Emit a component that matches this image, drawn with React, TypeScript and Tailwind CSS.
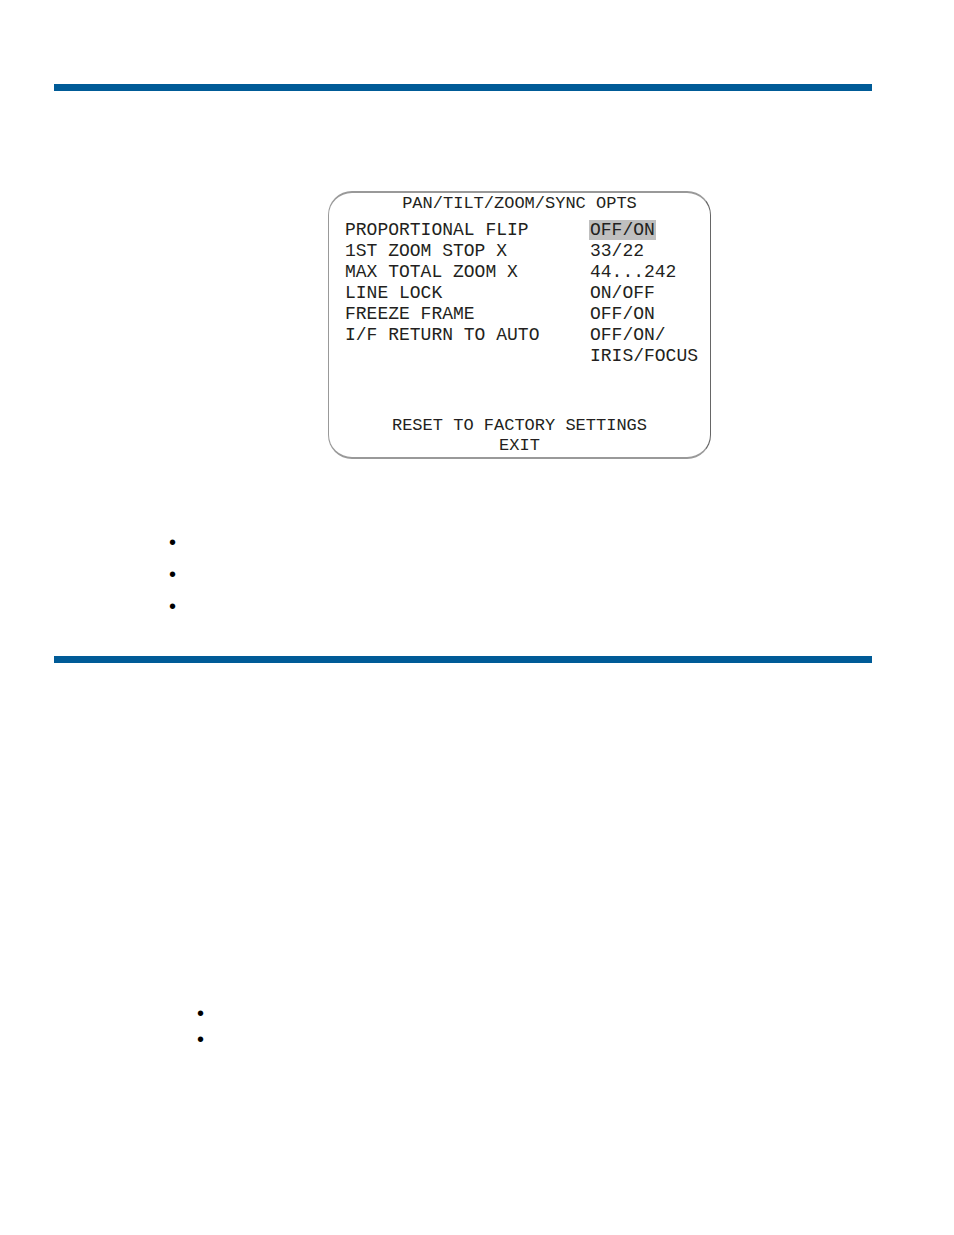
const options = [
  { label: 'PROPORTIONAL FLIP', value: 'OFF/ON', selected: true },
  { label: '1ST ZOOM STOP X', value: '33/22' },
  { label: 'MAX TOTAL ZOOM X', value: '44...242' },
  { label: 'LINE LOCK', value: 'ON/OFF' },
  { label: 'FREEZE FRAME', value: 'OFF/ON' },
  { label: 'I/F RETURN TO AUTO', value: 'OFF/ON/' },
  { label: '', value: 'IRIS/FOCUS' },
]

function Rule() {
  return <hr className="h-[7px] border-0 bg-[#005b97]" />
}

function Bullets({ count, className }: { count: number; className: string }) {
  return (
    <ul className={`flex flex-col text-xl leading-5 text-black ${className}`}>
      {Array.from({ length: count }, (_, i) => (
        <li key={i}>•</li>
      ))}
    </ul>
  )
}

function OptionsMenu() {
  return (
    <section className="mx-auto w-[383px] rounded-3xl border border-y-2 border-[#999] border-r-[#666] pt-px pb-px font-['Liberation_Mono',monospace] text-[#231f20]">
      <h1 className="text-center text-[17px] leading-5">PAN/TILT/ZOOM/SYNC OPTS</h1>
      <table className="mt-1.5 ml-4 text-left text-lg leading-[21px] whitespace-nowrap">
        <tbody>
          {options.map((o) => (
            <tr key={o.value + o.label}>
              <th scope="row" className="w-[244px] p-0 font-normal">{o.label}</th>
              <td className="p-0">
                <span className={o.selected ? 'inline-block bg-[#bfbfbf] px-px leading-5' : 'px-px'}>{o.value}</span>
              </td>
            </tr>
          ))}
        </tbody>
      </table>
      <div className="mt-[49px] flex flex-col items-center text-[17px] leading-5">
        <button type="button">RESET TO FACTORY SETTINGS</button>
        <button type="button">EXIT</button>
      </div>
    </section>
  )
}

export default function App() {
  return (
    <main className="min-h-screen bg-white pt-21 pr-[82px] pb-20 pl-[54px] font-['Liberation_Sans',sans-serif]">
      <Rule />
      <div className="pt-[100px] pl-[113px]">
        <OptionsMenu />
        <Bullets count={3} className="mt-[73px] gap-3 pl-0.5" />
      </div>
      <div className="mt-10">
        <Rule />
      </div>
      <Bullets count={2} className="mt-[340px] gap-1.5 pl-[143px]" />
    </main>
  )
}
